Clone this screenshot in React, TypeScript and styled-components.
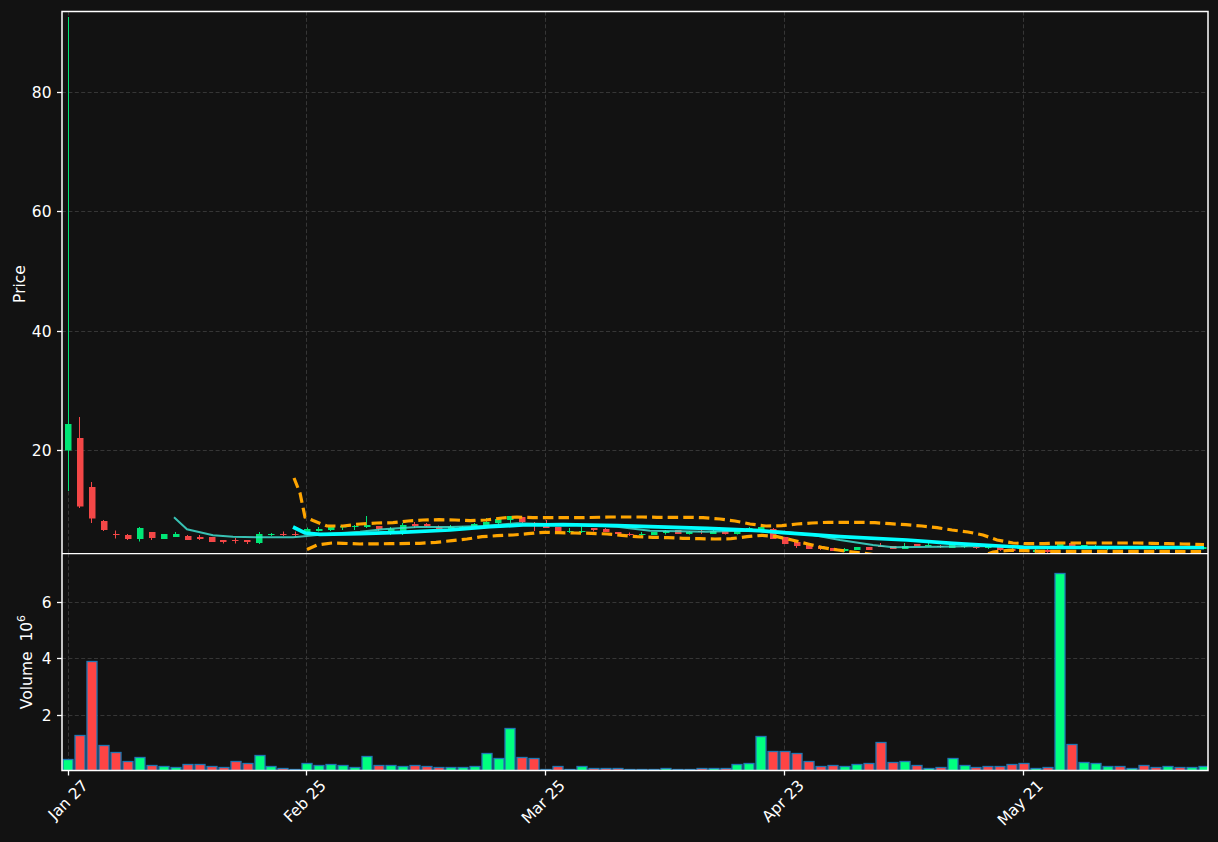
import React from 'react'
import styled, { createGlobalStyle } from 'styled-components'

const GlobalStyle = createGlobalStyle`
  html, body {
    margin: 0;
    padding: 0;
    background: #121212;
  }
`

const PLOT_LEFT = 62
const PLOT_RIGHT = 1208
const PRICE_TOP = 11.5
const PANEL_SPLIT = 553.5
const VOLUME_BOTTOM = 770.5

const barX = (idx: number) => 68.3 + 11.95 * idx

const dateTicks = [
  { x: 68.5, label: 'Jan 27' },
  { x: 306.5, label: 'Feb 25' },
  { x: 545.5, label: 'Mar 25' },
  { x: 784.5, label: 'Apr 23' },
  { x: 1023.5, label: 'May 21' },
]
const priceTicks = [
  { y: 92.5, label: '80' },
  { y: 211.5, label: '60' },
  { y: 331.5, label: '40' },
  { y: 450.5, label: '20' },
]
const volumeTicks = [
  { y: 602.5, label: '6' },
  { y: 658.5, label: '4' },
  { y: 715.5, label: '2' },
]

// [up, body top, body bottom, wick top, wick bottom] in page pixels
type Candle = [number, number, number, number, number]
const candles: Candle[] = [
  [1, 424, 450.5, 17, 491],
  [0, 438, 506.5, 417, 508],
  [0, 487, 518.5, 482, 523],
  [0, 521, 530, 520, 531],
  [0, 534, 535, 530.5, 538.5],
  [0, 535, 539, 534, 540],
  [1, 528, 539, 527, 541.5],
  [0, 532, 538, 532, 540],
  [1, 534, 539, 534, 539],
  [1, 534, 537, 532, 537],
  [0, 536, 540, 535, 540],
  [0, 537, 539, 535, 540],
  [0, 537, 542, 537, 542],
  [0, 540, 542, 540, 543.5],
  [0, 540, 541, 538, 543.5],
  [0, 540, 542, 540, 544],
  [1, 534, 543, 532, 544],
  [1, 534, 535, 533, 536],
  [0, 534, 535, 531.5, 536],
  [0, 534, 535, 531.5, 536.5],
  [1, 529, 534, 527.5, 534],
  [1, 529, 531, 527, 531.5],
  [1, 527, 530, 526, 531],
  [1, 526, 527.5, 525, 530],
  [1, 526, 527, 525, 530],
  [1, 525, 527, 516, 528],
  [0, 526, 529, 526, 531],
  [1, 529, 531, 527, 535],
  [1, 525, 533, 523, 535],
  [0, 524, 526, 522, 528],
  [0, 524, 526, 523, 527],
  [0, 527, 529, 525.5, 529],
  [1, 527, 529, 525, 530],
  [1, 527, 529, 526, 530],
  [1, 524, 528, 523, 529],
  [1, 522, 526, 518, 527],
  [1, 519, 523, 518, 525],
  [1, 516, 520, 516, 523],
  [0, 517, 522, 517, 523],
  [0, 523, 524, 522, 531],
  [0, 526, 528, 520, 528],
  [0, 527, 531, 527, 531],
  [1, 531, 532, 528, 533],
  [1, 531, 532, 526.5, 533],
  [0, 528, 530, 528, 531.5],
  [0, 529, 532, 528, 532],
  [0, 532, 534, 532, 534],
  [0, 534, 535, 532.5, 536],
  [1, 534, 535, 532, 536],
  [1, 532, 535, 532, 535],
  [1, 531, 533, 530, 534.5],
  [0, 530, 534, 530, 534],
  [1, 532, 534, 531, 534.5],
  [0, 531, 532, 530, 534],
  [1, 531, 534, 530, 534],
  [0, 531, 534, 530, 534.5],
  [1, 531, 534, 530, 534.5],
  [1, 528, 532, 527, 532],
  [1, 527, 531, 524, 531],
  [0, 529, 539, 528, 539],
  [0, 537, 544, 537, 544],
  [0, 542, 546, 541, 548],
  [0, 545, 549, 545, 549],
  [0, 546, 549, 546, 550],
  [0, 548, 551, 548, 551],
  [1, 549, 551, 548, 552],
  [1, 547, 550, 547, 550],
  [0, 547, 550, 547, 550],
  [0, 546, 547, 543, 547],
  [0, 546, 549, 546, 549],
  [1, 546, 549, 543, 549],
  [0, 544, 546, 544, 546],
  [1, 545, 546, 543, 546.5],
  [0, 546, 547, 545, 548],
  [1, 545, 548, 545, 548],
  [1, 546, 547, 545, 548],
  [0, 547, 548, 546, 549],
  [1, 547, 548, 546, 549],
  [0, 547, 550, 547, 551],
  [0, 549, 551, 548, 552],
  [1, 549, 552, 548, 552],
  [1, 550, 552, 549, 553],
  [0, 550, 552, 549, 553],
  [1, 543, 547, 543, 548],
  [0, 543, 546, 543, 547],
  [1, 545, 547, 545, 548],
  [1, 546, 547, 545, 548],
  [1, 547, 549, 546, 550],
  [0, 546, 548, 546, 549],
  [1, 547, 548, 546, 549],
  [0, 546, 548, 546, 549],
  [0, 547, 549, 546, 550],
  [1, 547, 549, 546, 549],
  [0, 547, 549, 546, 549],
  [1, 547, 549, 546, 549],
  [1, 547, 549, 546, 549],
]

// [up, bar height in px]
const volumes: [number, number][] = [
  [1, 10.7], [0, 34.7], [0, 108.7], [0, 24.7], [0, 17.7], [0, 8.7], [1, 12.7], [0, 4.7],
  [1, 3.7], [1, 2.7], [0, 5.7], [0, 5.7], [0, 3.7], [0, 2.7], [0, 8.7], [0, 6.7],
  [1, 14.7], [1, 3.7], [0, 1.7], [0, 0.7], [1, 6.7], [1, 4.7], [1, 5.7], [1, 4.7],
  [1, 2.7], [1, 13.7], [0, 4.7], [1, 4.7], [1, 3.7], [0, 4.7], [0, 3.7], [0, 2.7],
  [1, 2.7], [1, 2.7], [1, 3.7], [1, 16.7], [1, 11.7], [1, 41.7], [0, 12.7], [0, 11.7],
  [1, 0.7], [0, 3.7], [1, 0.7], [1, 3.7], [0, 1.7], [0, 1.7], [0, 1.7], [1, 0.7],
  [1, 0.7], [1, 0.7], [1, 1.7], [1, 0.7], [1, 0.7], [0, 1.7], [1, 1.7], [0, 1.7],
  [1, 5.7], [1, 6.7], [1, 33.7], [0, 18.7], [0, 18.7], [0, 16.7], [0, 8.7], [0, 3.7],
  [0, 4.7], [1, 3.7], [1, 5.7], [0, 6.7], [0, 27.7], [0, 7.7], [1, 8.7], [0, 4.7],
  [1, 1.7], [0, 2.7], [1, 11.7], [1, 4.7], [0, 2.7], [0, 3.7], [0, 3.7], [0, 5.7],
  [0, 6.7], [1, 1.7], [0, 2.7], [1, 197], [0, 25.7], [1, 7.7], [1, 6.7], [1, 3.7],
  [0, 3.7], [1, 1.7], [0, 4.7], [0, 2.7], [1, 3.7], [0, 2.7], [1, 2.7], [1, 3.7],
]

const upperBand =
  '294,478 300,493 305,517 313,520.5 327,526 343,526 360,524 377,523 393,522.7 408,521 423,520 439,519.7 455,520 470,520.7 486,520 502,518 517,517 533,517.7 563,517.7 580,517.7 610,517 627,517 642,517 657,517.3 688,517.3 703,517.7 720,519 735,521 750,524 766,526 782,525.7 797,524 812,523 828,522.3 843,522.3 859,522.3 875,522.7 890,523.7 906,524.7 922,526 937,527.7 952,530 968,532 983,535 997,540 1013,543 1028,543.7 1044,543.7 1059,543 1075,543 1091,543 1107,543 1122,543 1137,543 1152,543.3 1168,543.7 1183,544 1204,544.5'
const lowerBand =
  '307,549.5 317,545 332,543 343,543.3 360,544 390,543.7 420,543.3 436,542.3 452,540.7 467,539 482,536.7 497,535.7 513,535 528,533.7 544,532.3 559,532.7 575,533 591,533.3 607,534 622,535.3 637,536.7 653,537.3 668,537.7 683,538.3 700,538.7 715,539 731,538.7 747,536.7 762,535.3 777,536.7 792,540 808,544 823,547.7 838,550 853,552 870,554 900,560 960,560 985,555 993,552 1009,550.3 1025,550.7 1040,551.3 1204,551.5'
const slowAverage =
  '293,527 305,533 320,534.3 360,533.6 400,532.3 450,530 490,526.7 523,525 563,524.7 617,525.7 650,526.7 707,528.3 760,530.7 783,532.7 840,536.7 907,540 953,543.3 1000,546 1023,547.3 1204,547.5'
const fastAverage =
  '174,517.3 187,529.3 200,532.3 213,535.3 233,536.7 260,537.3 293,537.3 307,536 327,534 360,531.7 383,529.3 417,527 450,527 483,526 517,523.3 547,524 583,525 617,526.7 650,530.7 707,531.7 740,530.7 783,531.7 813,535 840,540 873,545 893,547.3 940,546.7 987,546 1023,546.7 1087,547.3 1204,548.3'

const Page = styled.div`
  width: 1218px;
  height: 842px;
  display: flex;
  flex-direction: column;
  background: #121212;
  overflow: hidden;
`

const PriceChart = styled.svg`
  display: block;
  width: 1218px;
  height: 553px;
  flex: none;
`

const VolumeChart = styled.svg`
  display: block;
  width: 1218px;
  height: 289px;
  flex: none;
`

const GridLine = styled.line`
  stroke: #363636;
  stroke-width: 1;
  stroke-dasharray: 4 2.4;
`

const TickMark = styled.line`
  stroke: #ffffff;
  stroke-width: 1.3;
`

const TickLabel = styled.text`
  fill: #ffffff;
  font-family: 'DejaVu Sans', sans-serif;
  font-size: 15.5px;
`

const AxisTitle = styled.text`
  fill: #ffffff;
  font-family: 'DejaVu Sans', sans-serif;
  font-size: 15.5px;
  text-anchor: middle;
`

const PlotBorder = styled.rect`
  fill: none;
  stroke: #ffffff;
  stroke-width: 1.5;
`

const Wick = styled.line<{ $up: boolean }>`
  stroke: ${(props) => (props.$up ? '#00e676' : '#f44747')};
  stroke-width: 1;
`

const CandleBody = styled.rect<{ $up: boolean }>`
  fill: ${(props) => (props.$up ? '#00e676' : '#f44747')};
`

const VolumeBar = styled.rect<{ $up: boolean }>`
  fill: ${(props) => (props.$up ? '#00ff7f' : '#ff4444')};
  stroke: #1f77b4;
  stroke-width: 1.3;
`

const BandLine = styled.polyline`
  fill: none;
  stroke: #ffa500;
  stroke-width: 3.2;
  stroke-dasharray: 10.5 5.1;
`

const AverageLine = styled.polyline<{ $slow?: boolean }>`
  fill: none;
  stroke: ${(props) => (props.$slow ? '#00ffff' : '#40e0d0')};
  stroke-width: ${(props) => (props.$slow ? 3.7 : 2)};
  opacity: ${(props) => (props.$slow ? 1 : 0.85)};
`

function VerticalGrid({ top, bottom }: { top: number; bottom: number }) {
  return (
    <>
      {dateTicks.map((tick) => (
        <GridLine key={tick.x} x1={tick.x} x2={tick.x} y1={top} y2={bottom} />
      ))}
    </>
  )
}

function YAxis({ ticks }: { ticks: { y: number; label: string }[] }) {
  return (
    <>
      {ticks.map((tick) => (
        <g key={tick.label}>
          <GridLine x1={PLOT_LEFT} x2={PLOT_RIGHT} y1={tick.y} y2={tick.y} />
          <TickMark x1={PLOT_LEFT - 5} x2={PLOT_LEFT} y1={tick.y} y2={tick.y} />
          <TickLabel x={PLOT_LEFT - 10.5} y={tick.y + 5.5} textAnchor="end">
            {tick.label}
          </TickLabel>
        </g>
      ))}
    </>
  )
}

export default function App() {
  return (
    <Page>
      <GlobalStyle />
      <PriceChart viewBox="0 0 1218 553">
        <defs>
          <clipPath id="price-plot">
            <rect
              x={PLOT_LEFT}
              y={PRICE_TOP}
              width={PLOT_RIGHT - PLOT_LEFT}
              height={PANEL_SPLIT - PRICE_TOP - 0.5}
            />
          </clipPath>
        </defs>
        <VerticalGrid top={PRICE_TOP} bottom={PANEL_SPLIT} />
        <YAxis ticks={priceTicks} />
        <AxisTitle transform="translate(24.5 284) rotate(-90)">Price</AxisTitle>
        <g clipPath="url(#price-plot)">
          {candles.map(([up, top, bottom, wickTop, wickBottom], idx) => {
            const wickX = Math.floor(barX(idx) - 0.3) + 0.5

            return (
              <g key={idx}>
                <Wick $up={!!up} x1={wickX} x2={wickX} y1={wickTop} y2={wickBottom} />
                <CandleBody
                  $up={!!up}
                  x={Math.round(barX(idx) - 3.2)}
                  y={top}
                  width={6.5}
                  height={bottom - top}
                />
              </g>
            )
          })}
          <AverageLine points={fastAverage} />
          <AverageLine $slow points={slowAverage} />
          <BandLine points={upperBand} />
          <BandLine points={lowerBand} />
        </g>
        <PlotBorder
          x={PLOT_LEFT}
          y={PRICE_TOP}
          width={PLOT_RIGHT - PLOT_LEFT}
          height={PANEL_SPLIT - PRICE_TOP + 10}
        />
      </PriceChart>
      <VolumeChart viewBox="0 553 1218 289">
        <defs>
          <clipPath id="volume-plot">
            <rect
              x={PLOT_LEFT}
              y={PANEL_SPLIT}
              width={PLOT_RIGHT - PLOT_LEFT}
              height={VOLUME_BOTTOM - PANEL_SPLIT}
            />
          </clipPath>
        </defs>
        <VerticalGrid top={PANEL_SPLIT} bottom={VOLUME_BOTTOM} />
        <YAxis ticks={volumeTicks} />
        <AxisTitle transform="translate(31.5 662) rotate(-90)">
          Volume{'\u00a0\u00a0'}10
          <tspan fontSize="11" dy="-7">
            6
          </tspan>
        </AxisTitle>
        <g clipPath="url(#volume-plot)">
          {volumes.map(([up, height], idx) => (
            <VolumeBar
              key={idx}
              $up={!!up}
              x={Math.round(barX(idx) - 5)}
              y={VOLUME_BOTTOM - Math.round(height)}
              width={10}
              height={Math.round(height)}
            />
          ))}
        </g>
        <PlotBorder
          x={PLOT_LEFT}
          y={PANEL_SPLIT}
          width={PLOT_RIGHT - PLOT_LEFT}
          height={VOLUME_BOTTOM - PANEL_SPLIT}
        />
        {dateTicks.map((tick) => (
          <g key={tick.x}>
            <TickMark x1={tick.x} x2={tick.x} y1={VOLUME_BOTTOM} y2={VOLUME_BOTTOM + 5} />
            <TickLabel
              textAnchor="end"
              transform={`translate(${tick.x + 20.5} ${VOLUME_BOTTOM + 16}) rotate(-45)`}
            >
              {tick.label}
            </TickLabel>
          </g>
        ))}
      </VolumeChart>
    </Page>
  )
}
